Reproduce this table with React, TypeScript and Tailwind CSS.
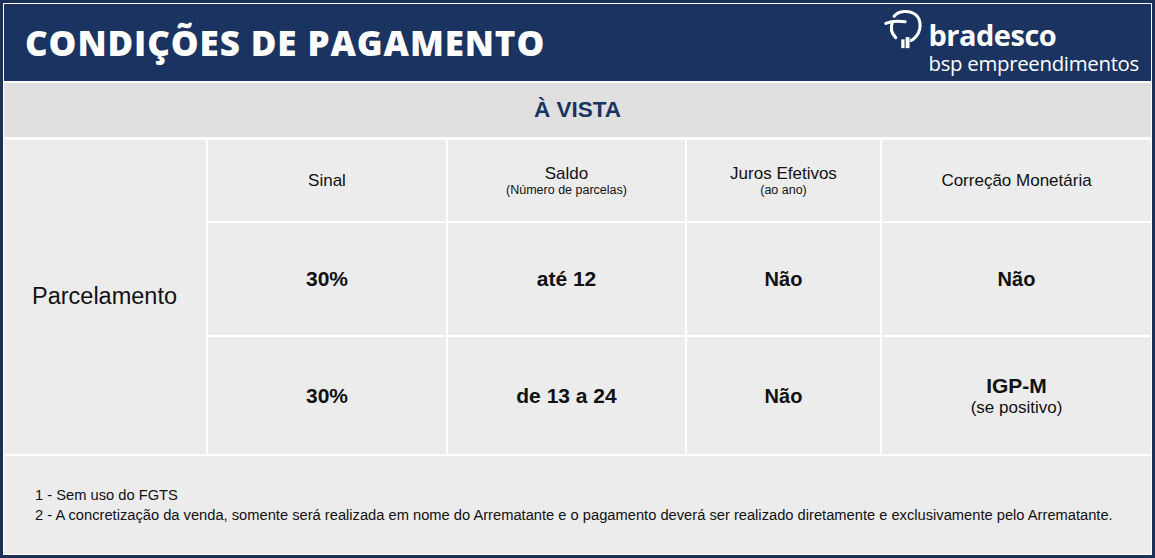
import React from "react";

function Logo() {
  return (
    <div className="flex items-start">
      <svg width="44" height="44" viewBox="0 0 40 40" className="mt-[0px] mr-[2px]">
        <g fill="none" stroke="#ffffff" strokeWidth="2.8" strokeLinecap="round">
          <path d="M11 7.5 C 15 2.5, 25 1.5, 31 6.5 C 36 11, 36 21, 30 27 C 29 28, 28 29, 26.5 29.5" />
          <path d="M3.5 14 C 8 12, 14 11.5, 21 12.5" />
          <path d="M9.5 13 C 7.5 18, 8.5 23, 12.5 27" />
        </g>
        <rect x="17.5" y="28.5" width="3" height="8" fill="#ffffff" />
        <rect x="21.5" y="26.5" width="3.5" height="10" fill="#ffffff" />
      </svg>
      <div className="flex flex-col text-white font-['Open_Sans',sans-serif] leading-none">
        <span className="text-[29px] leading-[29px] font-bold tracking-[-0.5px] mt-[12px]">bradesco</span>
        <span className="text-[20.4px] leading-[21px] font-normal tracking-[-0.3px] mt-[4px]">bsp empreendimentos</span>
      </div>
    </div>
  );
}

export default function App() {
  const cell = "bg-[#ececec] flex flex-col items-center justify-center text-[#111111]";
  return (
    <div className="w-[1155px] h-[558px] bg-[#1b3158] p-[3px] font-['Liberation_Sans',Arial,sans-serif]">
      <div className="w-full h-full bg-white p-px flex flex-col gap-[2px]">
        <div className="h-[77px] bg-[#1b3360] flex items-center justify-between pl-[21px] pr-[12px]">
          <h1 className="text-white font-['Open_Sans',sans-serif] font-extrabold text-[35px] tracking-[0.9px] leading-none">
            CONDIÇÕES DE PAGAMENTO
          </h1>
          <div className="self-start mt-[4px]">
            <Logo />
          </div>
        </div>
        <div className="h-[54px] bg-[#e0e0e0] flex items-center justify-center">
          <span className="font-bold text-[22.5px] text-[#1b3360] leading-none">À VISTA</span>
        </div>
        <div className="flex-1 flex flex-col gap-[2px] mt-[1px]">
          <div className="grid grid-cols-[202px_238px_237px_193px_1fr] grid-rows-[81px_112px_117px] gap-[2px]">
            <div className="row-span-3 bg-[#ececec] flex items-center pl-[28px] text-[23.5px] text-[#111111]">
              Parcelamento
            </div>
            <div className={cell}>
              <span className="text-[17px]">Sinal</span>
            </div>
            <div className={cell}>
              <span className="text-[17px] leading-[18px]">Saldo</span>
              <span className="text-[12.5px] leading-[14px]">(Número de parcelas)</span>
            </div>
            <div className={cell}>
              <span className="text-[17px] leading-[18px]">Juros Efetivos</span>
              <span className="text-[12.5px] leading-[14px]">(ao ano)</span>
            </div>
            <div className={cell}>
              <span className="text-[17px]">Correção Monetária</span>
            </div>

            <div className={cell}>
              <span className="text-[21px] font-bold">30%</span>
            </div>
            <div className={cell}>
              <span className="text-[21px] font-bold">até 12</span>
            </div>
            <div className={cell}>
              <span className="text-[20px] font-bold">Não</span>
            </div>
            <div className={cell}>
              <span className="text-[20px] font-bold">Não</span>
            </div>

            <div className={cell}>
              <span className="text-[21px] font-bold">30%</span>
            </div>
            <div className={cell}>
              <span className="text-[21px] font-bold">de 13 a 24</span>
            </div>
            <div className={cell}>
              <span className="text-[20px] font-bold">Não</span>
            </div>
            <div className={cell}>
              <span className="text-[21px] font-bold leading-[24px]">IGP-M</span>
              <span className="text-[17px] leading-[19px]">(se positivo)</span>
            </div>
          </div>
          <div className="flex-1 bg-[#ececec] flex flex-col justify-center pl-[31px] text-[14.7px] leading-[20px] text-[#111111]">
            <span>1 - Sem uso do FGTS</span>
            <span>
              2 - A concretização da venda, somente será realizada em nome do Arrematante e o pagamento deverá ser realizado diretamente e exclusivamente pelo Arrematante.
            </span>
          </div>
        </div>
      </div>
    </div>
  );
}
